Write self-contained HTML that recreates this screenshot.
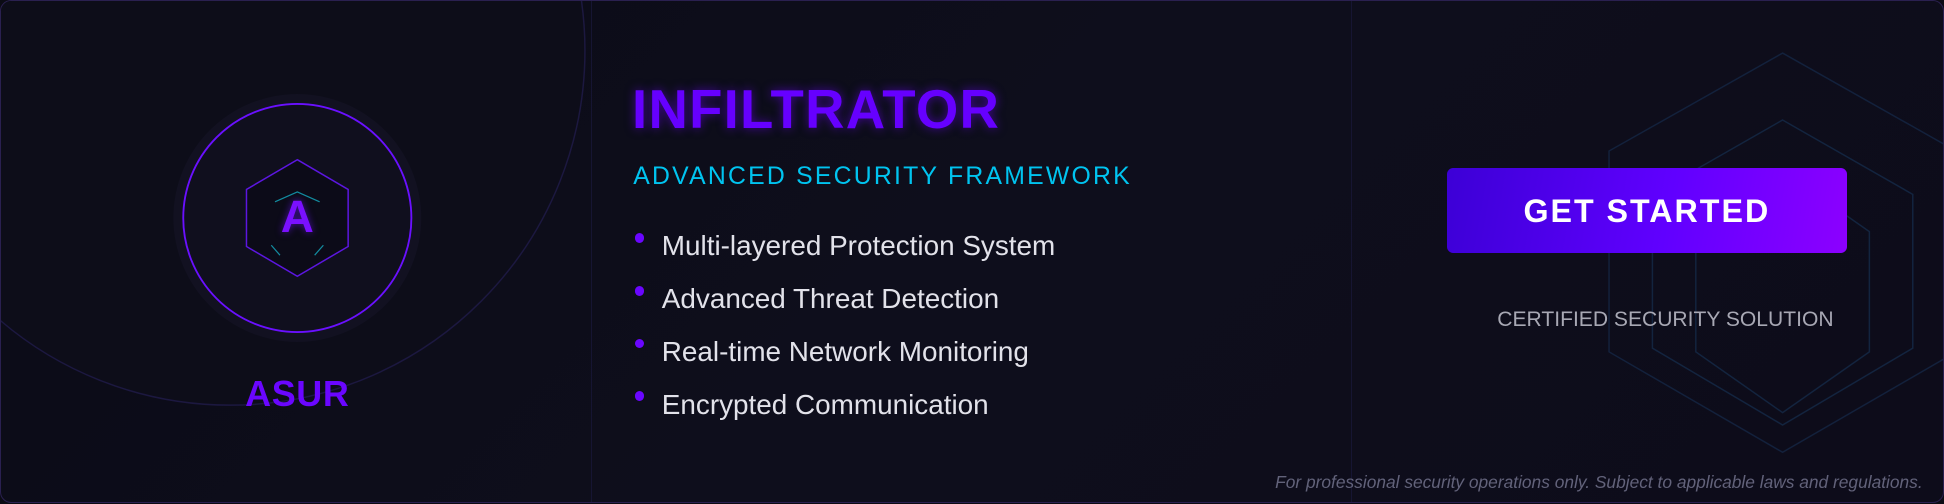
<!DOCTYPE html>
<html><head><meta charset="utf-8"><style>
html,body{margin:0;padding:0;background:#0b0b14;overflow:hidden;width:1944px;height:504px}
#w{zoom:1.2398;width:1568px;height:406px;position:relative;font-family:"Liberation Sans","DejaVu Sans",sans-serif}
.card{position:absolute;left:0;top:0;width:1566px;height:404px;border:1px solid #2a2050;border-radius:9px;background:linear-gradient(135deg,#0b0b16,#0e0e1c 50%,#0d0c1a);overflow:hidden}
.abs{position:absolute}
.div{position:absolute;top:0;width:1px;height:406px;background:#161532}
.dot{display:inline-block;width:8px;height:8px;border-radius:50%;background:#6a06ff;vertical-align:10px;margin:0 14px 0 1px}
</style></head><body><div id="w"><div class="card">
<svg class="abs" style="left:0;top:0" width="1568" height="406">
<circle cx="185" cy="40" r="286" fill="#0d0d19" stroke="#1c1840" stroke-width="1.2"/>
<circle cx="239" cy="175" r="100" fill="#121121"/>
<circle cx="239" cy="175" r="92" fill="#100f1e" stroke="#6a10ff" stroke-width="1.5"/>
<polygon points="239,128 280,152 280,198 239,222 198,198 198,152" fill="#0c0b18" stroke="#5c16e0" stroke-width="1.2"/>
<path d="M221,162 L239,154 L257,162" fill="none" stroke="#138ca0" stroke-width="1"/>
<path d="M218,197 L225,205 M260,197 L253,205" fill="none" stroke="#138ca0" stroke-width="1"/>
<polygon points="1437,42 1577,121 1577,283 1437,364 1297,283 1297,121" fill="none" stroke="#13213c" stroke-width="1.2"/>
<polygon points="1437,96 1542,156 1542,280 1437,342 1332,280 1332,156" fill="none" stroke="#13243f" stroke-width="1.2"/>
<polygon points="1437,137 1507,186 1507,283 1437,332 1367,283 1367,186" fill="none" stroke="#13243f" stroke-width="1.2"/>
</svg>
<div class="div" style="left:476px"></div><div class="div" style="left:1089px"></div>
<div class="abs" style="left:199px;top:152px;width:80px;text-align:center;font-weight:bold;font-size:37px;color:#7a10ff;text-shadow:0 0 6px rgba(110,20,255,.6)">A</div>
<div class="abs" style="left:139px;top:300px;width:200px;text-align:center;font-weight:bold;font-size:29px;letter-spacing:0.5px;color:#6a06ff">ASUR</div>
<div class="abs" style="left:509px;top:62px;font-weight:bold;font-size:44px;letter-spacing:1px;color:#6600ff;text-shadow:0 0 8px rgba(110,0,255,.55)">INFILTRATOR</div>
<div class="abs" style="left:510px;top:131px;font-size:20px;letter-spacing:1.8px;color:#00c4f0">ADVANCED SECURITY FRAMEWORK</div>
<div class="abs" style="left:510px;top:177px;font-size:22.5px;color:#e2e2ea;line-height:42.5px">
<div><span class="dot"></span>Multi-layered Protection System</div>
<div><span class="dot"></span>Advanced Threat Detection</div>
<div><span class="dot"></span>Real-time Network Monitoring</div>
<div><span class="dot"></span>Encrypted Communication</div>
</div>
<div class="abs" style="left:1166px;top:135px;width:323px;height:68px;border-radius:5px;background:linear-gradient(100deg,#3c00d6,#6000ff 55%,#8c00ff);color:#fff;font-weight:bold;font-size:26px;letter-spacing:1.6px;text-align:center;line-height:70px">GET STARTED</div>
<div class="abs" style="left:1166px;top:248px;width:353px;text-align:center;font-size:17px;color:#a8a8b4">CERTIFIED SECURITY SOLUTION</div>
<div class="abs" style="right:16px;top:380px;font-style:italic;font-size:14px;color:#62627a">For professional security operations only. Subject to applicable laws and regulations.</div>
</div></div></body></html>
